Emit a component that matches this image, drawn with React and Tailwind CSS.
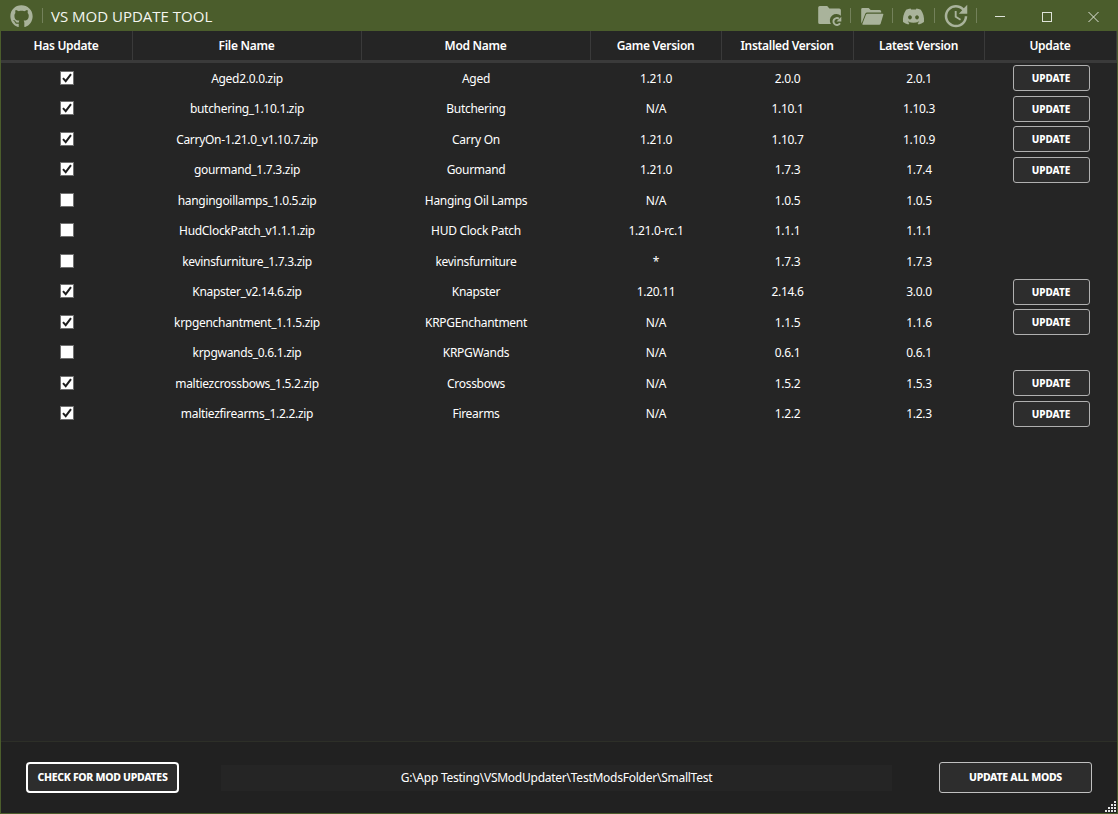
import React from "react";
import { FaGithub, FaDiscord } from "react-icons/fa";
import { MdUpdate } from "react-icons/md";

const COLUMNS = [
  "Has Update",
  "File Name",
  "Mod Name",
  "Game Version",
  "Installed Version",
  "Latest Version",
  "Update",
];

const MODS = [
  [true, "Aged2.0.0.zip", "Aged", "1.21.0", "2.0.0", "2.0.1"],
  [true, "butchering_1.10.1.zip", "Butchering", "N/A", "1.10.1", "1.10.3"],
  [true, "CarryOn-1.21.0_v1.10.7.zip", "Carry On", "1.21.0", "1.10.7", "1.10.9"],
  [true, "gourmand_1.7.3.zip", "Gourmand", "1.21.0", "1.7.3", "1.7.4"],
  [false, "hangingoillamps_1.0.5.zip", "Hanging Oil Lamps", "N/A", "1.0.5", "1.0.5"],
  [false, "HudClockPatch_v1.1.1.zip", "HUD Clock Patch", "1.21.0-rc.1", "1.1.1", "1.1.1"],
  [false, "kevinsfurniture_1.7.3.zip", "kevinsfurniture", "*", "1.7.3", "1.7.3"],
  [true, "Knapster_v2.14.6.zip", "Knapster", "1.20.11", "2.14.6", "3.0.0"],
  [true, "krpgenchantment_1.1.5.zip", "KRPGEnchantment", "N/A", "1.1.5", "1.1.6"],
  [false, "krpgwands_0.6.1.zip", "KRPGWands", "N/A", "0.6.1", "0.6.1"],
  [true, "maltiezcrossbows_1.5.2.zip", "Crossbows", "N/A", "1.5.2", "1.5.3"],
  [true, "maltiezfirearms_1.2.2.zip", "Firearms", "N/A", "1.2.2", "1.2.3"],
];

const GRID = "grid grid-cols-[132px_229px_229px_131px_132px_131px_1fr]";

function FolderRefreshIcon() {
  return (
    <svg width="24" height="22" viewBox="0 0 24 22" fill="currentColor">
      <path d="M1.800 1h7.400l2.200 2.500H21.200a1.700 1.700 0 0 1 1.700 1.700v5.600a6.500 6.500 0 0 0-10 8.200H1.800A1.600 1.600 0 0 1 .2 17.400V2.600A1.600 1.600 0 0 1 1.800 1z" />
      <path d="M20.900 13.600a3.500 3.500 0 1 0 1.100 4.600" fill="none" stroke="currentColor" strokeWidth="1.900" />
      <path d="M23.300 11.800v4.800h-4.800z" />
    </svg>
  );
}

function FolderOpenIcon() {
  return (
    <svg width="23" height="19" viewBox="0 0 23 19" fill="currentColor">
      <path d="M1.500 1h6.200l2 2h9a1.500 1.500 0 0 1 1.500 1.500V5.500H6.200a2 2 0 0 0-1.900 1.300L1 15.200V16.500L.2 15V2.300A1.300 1.300 0 0 1 1.500 1z" />
      <path d="M6.400 6.700h15.100a.8.8 0 0 1 .8 1.100l-2.700 9a1.500 1.500 0 0 1-1.400 1H2.200a.8.8 0 0 1-.8-1.100L4.900 7.700a1.600 1.600 0 0 1 1.500-1z" />
    </svg>
  );
}

function Separator() {
  return <div className="h-[15px] w-px bg-[#73815a]" />;
}

function TitleBar() {
  return (
    <header className="flex h-[31px] shrink-0 items-center bg-[#4b5d2c] text-[#a9b39b]">
      <div className="flex w-[42px] pt-px pl-[10px]">
        <FaGithub size={23} />
      </div>
      <Separator />
      <h1 className="ml-2 pt-px font-['Open_Sans',sans-serif] text-[15px] font-normal tracking-[0px] whitespace-nowrap text-[#f4f6f0]">
        VS MOD UPDATE TOOL
      </h1>
      <nav className="ml-auto flex items-center">
        <div className="flex w-[32px] pt-px"><FolderRefreshIcon /></div>
        <Separator />
        <div className="flex w-[41px] justify-center pt-px pl-px"><FolderOpenIcon /></div>
        <Separator />
        <div className="flex w-[41px] justify-center pt-px"><FaDiscord size={23} /></div>
        <Separator />
        <div className="flex w-[41px] justify-center pt-px"><MdUpdate size={30} /></div>
        <Separator />
      </nav>
      <div className="flex w-[141px] items-center pt-px text-[#dfe3d9]">
        <svg width="141" height="30" viewBox="0 0 141 30" fill="none" stroke="currentColor">
          <path d="M18 15.500h10" />
          <rect x="65.500" y="11.500" width="9" height="9" />
          <path d="M111.500 11l10 10M121.500 11l-10 10" />
        </svg>
      </div>
    </header>
  );
}

function CheckBox({ checked }) {
  return (
    <div role="checkbox" aria-checked={checked} className="h-[14px] w-[14px] border border-[#707070] bg-white">
      {checked && (
        <svg width="12" height="12" viewBox="0 0 12 12" fill="none" stroke="#1e1e1e" strokeWidth="2">
          <path d="M2 6.200l2.700 3L10 2.200" />
        </svg>
      )}
    </div>
  );
}

function ModRow({ mod }) {
  const [hasUpdate, ...cells] = mod;
  return (
    <div className={`${GRID} h-[30.500px] items-center text-center text-[12px] tracking-[-0.3px]`}>
      <div className="flex justify-center pb-[1.500px]"><CheckBox checked={hasUpdate} /></div>
      {cells.map((cell, i) => (
        <div key={i} className="pt-[0.500px] pr-px whitespace-nowrap">{cell}</div>
      ))}
      <div className="flex justify-center">
        {hasUpdate && (
          <button className="h-[26px] w-[77px] rounded-[3px] border border-[#b0b0b0] bg-[#2d2d2d] pt-px text-[10px] font-extrabold tracking-[0px]">
            UPDATE
          </button>
        )}
      </div>
    </div>
  );
}

function ResizeGrip() {
  return (
    <svg className="absolute right-0 bottom-0" width="12" height="12" viewBox="0 0 12 12" fill="#e4e4e4">
      {[0, 1, 2, 3].map((row) =>
        [0, 1, 2, 3].filter((col) => col + row >= 3).map((col) => (
          <rect key={`${row}-${col}`} x={col * 3} y={row * 3} width="2" height="2" />
        ))
      )}
    </svg>
  );
}

export default function App() {
  return (
    <div className="flex h-[814px] w-[1118px] flex-col overflow-hidden bg-[#252525] font-['Noto_Sans',sans-serif] text-white">
      <TitleBar />
      <div className="flex min-h-0 flex-1 flex-col border-x border-b border-[#4b5d2c]">
        <div className={`${GRID} h-[32px] shrink-0 border-b-[3px] border-[#3a3a3a] text-center text-[12px] font-semibold tracking-[-0.3px]`}>
          {COLUMNS.map((label) => (
            <div key={label} className="flex items-center justify-center border-r border-[#3a3a3a] pt-px pr-px whitespace-nowrap">
              {label}
            </div>
          ))}
        </div>
        <main className="min-h-0 flex-1">
          {MODS.map((mod) => <ModRow key={mod[1]} mod={mod} />)}
        </main>
        <footer className="relative flex h-[72px] shrink-0 items-center border-t border-[#2d2f28] bg-[#212121] pr-[25px] pl-[25px]">
          <button className="h-[31px] w-[153px] rounded-[4px] border-2 border-white bg-[#2d2d2d] pt-px text-[10.500px] font-extrabold tracking-[-0.3px] whitespace-nowrap">
            CHECK FOR MOD UPDATES
          </button>
          <div className="ml-[42px] flex h-[26px] w-[671px] items-center justify-center bg-[#252525] text-[12px] tracking-[-0.25px]">
            G:\App Testing\VSModUpdater\TestModsFolder\SmallTest
          </div>
          <button className="ml-auto h-[31px] w-[153px] rounded-[3px] border border-[#c0c0c0] bg-[#2d2d2d] pt-px text-[10.500px] font-extrabold tracking-[-0.3px] whitespace-nowrap">
            UPDATE ALL MODS
          </button>
          <ResizeGrip />
        </footer>
      </div>
    </div>
  );
}
